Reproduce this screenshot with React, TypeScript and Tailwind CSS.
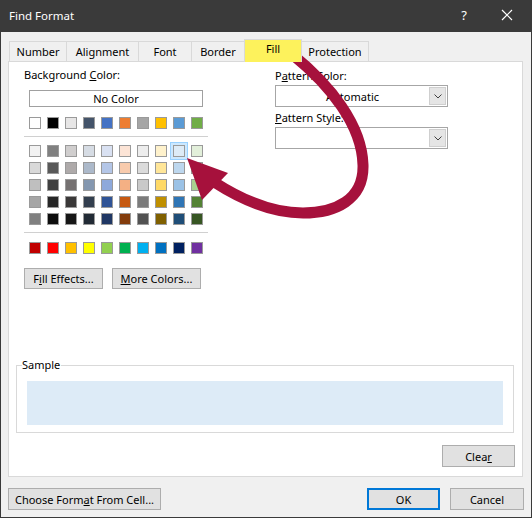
import React from 'react';

const themeRow = ['#FFFFFF', '#000000', '#E7E6E6', '#44546A', '#4472C4', '#ED7D31', '#A5A5A5', '#FFC000', '#5B9BD5', '#70AD47'];

const tintRows = [
  ['#F2F2F2', '#808080', '#D0CECE', '#D6DCE4', '#D9E1F2', '#FCE4D6', '#EDEDED', '#FFF2CC', '#DDEBF7', '#E2EFDA'],
  ['#D9D9D9', '#595959', '#AEAAAA', '#ACB9CA', '#B4C6E7', '#F8CBAD', '#DBDBDB', '#FFE699', '#BDD7EE', '#C6E0B4'],
  ['#BFBFBF', '#404040', '#757171', '#8497B0', '#8EA9DB', '#F4B084', '#C9C9C9', '#FFD966', '#9BC2E6', '#A9D08E'],
  ['#A6A6A6', '#262626', '#3A3838', '#333F4F', '#305496', '#C65911', '#7B7B7B', '#BF8F00', '#2F75B5', '#548235'],
  ['#808080', '#0D0D0D', '#161616', '#222B35', '#203764', '#833C0C', '#525252', '#806000', '#1F4E78', '#375623'],
];

const standardRow = ['#C00000', '#FF0000', '#FFC000', '#FFFF00', '#92D050', '#00B050', '#00B0F0', '#0070C0', '#002060', '#7030A0'];

const tabs = [
  { label: 'Number', w: 'w-[58px]' },
  { label: 'Alignment', w: 'w-[73px]' },
  { label: 'Font', w: 'w-[54px]' },
  { label: 'Border', w: 'w-[54px]' },
  { label: 'Fill', w: 'w-[58px]', active: true },
  { label: 'Protection', w: 'w-[68px]' },
];

const Swatch: React.FC<{ color: string; selected?: boolean }> = ({ color, selected }) => (
  <span
    className={
      'block w-[12px] h-[12px] border border-[#9a9a9a] ' +
      (selected ? 'shadow-[0_0_0_2px_#cce8ff,0_0_0_3px_#99d1ff]' : '')
    }
    style={{ backgroundColor: color }}
  />
);

const SwatchRow: React.FC<{ colors: string[]; selectedIndex?: number }> = ({ colors, selectedIndex }) => (
  <div className="flex gap-[6px]">
    {colors.map((c, i) => (
      <Swatch key={i} color={c} selected={i === selectedIndex} />
    ))}
  </div>
);

const Button: React.FC<{ className?: string; children: React.ReactNode }> = ({ className = '', children }) => (
  <div
    className={
      'h-[22px] flex items-center justify-center bg-[#e1e1e1] border border-[#adadad] text-black ' + className
    }
  >
    <span className="whitespace-nowrap">{children}</span>
  </div>
);

const Dropdown: React.FC<{ value?: string }> = ({ value }) => (
  <div className="h-[22px] w-[173px] flex bg-white border border-[#a6a6a6]">
    <div className="flex-1 flex items-center justify-center">{value}</div>
    <div className="w-[17px] my-px mr-px bg-[#e5e5e5] border border-[#cfcfcf] flex items-center justify-center">
      <svg width="8" height="5" viewBox="0 0 8 5">
        <path d="M0.5 0.5 L4 4 L7.5 0.5" fill="none" stroke="#404040" strokeWidth="1" />
      </svg>
    </div>
  </div>
);

export default function App() {
  return (
    <div
      className="relative w-[532px] h-[518px] bg-[#f0f0f0] border-x border-b border-[#3a3a3a] flex flex-col text-[11px] leading-[15px] text-black"
      style={{ fontFamily: '"Noto Sans", "Open Sans", sans-serif' }}
    >
      {/* title bar */}
      <div className="h-[32px] -mx-px pb-[2px] bg-[#3a3a3a] flex items-center text-white">
        <span className="pl-[9px] text-[11.5px] flex-1">Find Format</span>
        <span className="w-[20px] text-center text-[13px] mr-[27px]">?</span>
        <svg className="mr-[19px]" width="12" height="12" viewBox="0 0 12 12">
          <path d="M1 1 L11 11 M11 1 L1 11" stroke="white" strokeWidth="1.2" />
        </svg>
      </div>

      {/* tabs */}
      <div className="mt-[7px] ml-[8px] h-[22px] flex items-end">
        {tabs.map((t, i) => (
          <div
            key={t.label}
            className={
              t.w +
              ' flex items-center justify-center border border-b-0 border-[#d9d9d9] ' +
              (i > 0 ? '-ml-px ' : '') +
              (t.active
                ? 'relative z-10 h-[23px] -mb-px bg-[#fdf25c] pb-[5px]'
                : 'h-[20px] bg-[#f0f0f0]')
            }
          >
            {t.label}
          </div>
        ))}
      </div>

      {/* panel */}
      <div className="ml-[7px] mr-[8px] h-[416px] bg-white border border-[#d9d9d9] flex flex-col">
        <div className="flex">
          {/* background color */}
          <div className="ml-[15px] w-[184px] flex flex-col">
            <div className="mt-[5px]">
              Background <span className="underline">C</span>olor:
            </div>
            <div className="mt-[8px] ml-[5px] w-[174px] h-[17px] border border-[#a0a0a0] flex items-center justify-center">
              No Color
            </div>
            <div className="mt-[10px] ml-[5px]">
              <SwatchRow colors={themeRow} />
            </div>
            <div className="mt-[7px] h-px bg-[#d0d0d0]" />
            <div className="mt-[8px] ml-[5px] flex flex-col gap-[5px]">
              {tintRows.map((row, i) => (
                <SwatchRow key={i} colors={row} selectedIndex={i === 0 ? 8 : undefined} />
              ))}
            </div>
            <div className="mt-[7px] h-px bg-[#d0d0d0]" />
            <div className="mt-[9px] ml-[5px]">
              <SwatchRow colors={standardRow} />
            </div>
            <div className="mt-[14px] flex gap-[9px]">
              <Button className="w-[79px] !h-[21px]">
                F<span className="underline">i</span>ll Effects...
              </Button>
              <Button className="w-[89px] !h-[21px]">
                <span className="underline">M</span>ore Colors...
              </Button>
            </div>
          </div>

          {/* pattern */}
          <div className="ml-[67px] w-[173px] flex flex-col">
            <div className="mt-[6px]">
              P<span className="underline">a</span>ttern Color:
            </div>
            <div className="mt-[2px]">
              <Dropdown value="Automatic" />
            </div>
            <div className="mt-[3px]">
              <span className="underline">P</span>attern Style:
            </div>
            <div className="mt-[2px]">
              <Dropdown />
            </div>
          </div>
        </div>

        {/* sample */}
        <div className="relative mt-[76px] ml-[7px] w-[498px] h-[68px] border border-[#d9d9d9] pt-[15px] pl-[10px]">
          <span className="absolute left-[5px] -top-[9px] bg-white pr-[1px]">Sample</span>
          <div className="w-[476px] h-[44px] bg-[#ddebf7]" />
        </div>

        <div className="mt-[12px] mr-[7px] flex justify-end">
          <Button className="w-[73px]">
            Clea<span className="underline">r</span>
          </Button>
        </div>
      </div>

      {/* bottom buttons */}
      <div className="mt-[11px] ml-[7px] mr-[7px] flex">
        <Button className="w-[153px]">
          Choose Form<span className="underline">a</span>t From Cell...
        </Button>
        <div className="flex-1" />
        <div className="w-[73px] h-[22px] flex items-center justify-center bg-[#e1e1e1] border-2 border-[#0078d7]">
          OK
        </div>
        <Button className="w-[74px] ml-[10px]">Cancel</Button>
      </div>

      {/* annotation arrow */}
      <svg
        className="absolute left-[-1px] top-0 pointer-events-none"
        width="532"
        height="518"
        viewBox="0 0 532 518"
      >
        <path
          d="M293 55 C330 85 362 125 363 165 C364 200 335 213 303 213 C275 213 245 202 214 182"
          fill="none"
          stroke="#a6113c"
          strokeWidth="11"
          strokeLinecap="round"
        />
        <polygon points="187,158 228,173 202,200" fill="#a6113c" />
      </svg>
    </div>
  );
}
